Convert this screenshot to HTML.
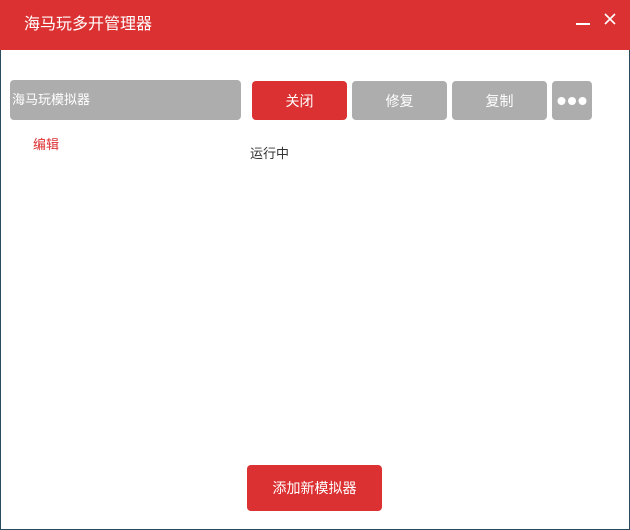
<!DOCTYPE html>
<html><head><meta charset="utf-8"><style>
*{margin:0;padding:0;box-sizing:border-box}
body{width:630px;height:530px;overflow:hidden;font-family:"Liberation Sans","Noto Sans CJK SC",sans-serif;background:#fff;position:relative}
.frame{position:absolute;left:0;top:0;width:630px;height:530px;border:1px solid #2a4a5e;border-top:none}
.hd{position:absolute;left:0;top:0;width:630px;height:50px;background:#dc3132;color:#fff}
.t{position:absolute;left:24px;top:15px;font-size:16px;line-height:20px}
.a{position:absolute;color:#fff;font-size:14px;text-align:center;border-radius:4px}
</style></head><body>
<div class="frame"></div>
<div class="hd"><div class="t">海马玩多开管理器</div>
<div style="position:absolute;left:576px;top:23px;width:14px;height:1.5px;background:#fff"></div>
<svg style="position:absolute;left:604px;top:13px" width="12" height="12"><path d="M1 1L11 11M11 1L1 11" stroke="#fff" stroke-width="1.6"/></svg>
</div>
<div class="a" style="left:10px;top:80px;width:231px;height:40px;background:#adadad;text-align:left;line-height:40px;font-size:13px;padding-left:2px">海马玩模拟器</div>
<div class="a" style="left:252px;top:81px;width:95px;height:39px;line-height:41px;background:#dc3132">关闭</div>
<div class="a" style="left:352px;top:81px;width:95px;height:39px;line-height:41px;background:#adadad">修复</div>
<div class="a" style="left:452px;top:81px;width:95px;height:39px;line-height:41px;background:#adadad">复制</div>
<div class="a" style="left:552px;top:81px;width:40px;height:39px;background:#adadad">
<svg width="40" height="39"><circle cx="9.5" cy="20" r="4" fill="#fff"/><circle cx="20" cy="20" r="4" fill="#fff"/><circle cx="30.5" cy="20" r="4" fill="#fff"/></svg></div>
<div style="position:absolute;left:33px;top:134px;font-size:13px;color:#dc3132">编辑</div>
<div style="position:absolute;left:250px;top:143px;font-size:13px;color:#333">运行中</div>
<div class="a" style="left:247px;top:465px;width:135px;height:46px;line-height:46px;background:#dc3132">添加新模拟器</div>
</body></html>
